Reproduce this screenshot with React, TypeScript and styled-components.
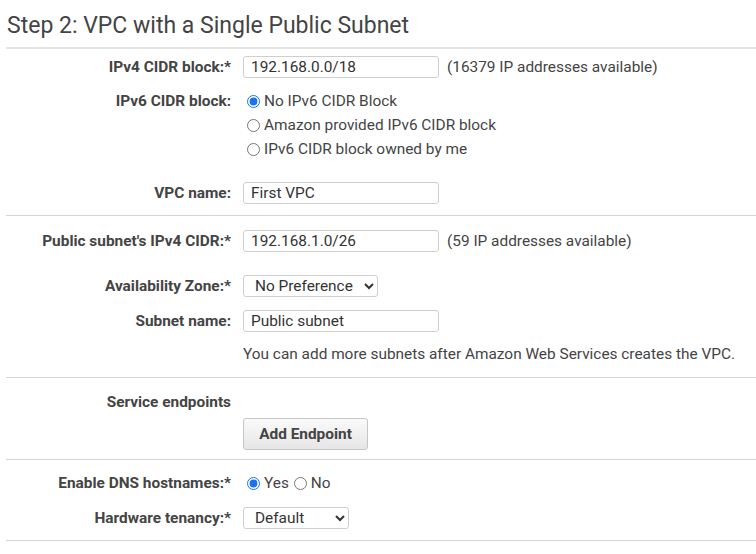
import React from "react";
import styled, { createGlobalStyle } from "styled-components";

const Global = createGlobalStyle`
  html, body { margin: 0; padding: 0; background: #fff; }
  body { font-family: Roboto, "Liberation Sans", Arial, sans-serif; color: #444; }
  * { box-sizing: border-box; }
`;

const FS = 15.4;

const Page = styled.div`
  width: 756px;
  height: 554px;
  padding-left: 6px;
  overflow: hidden;
`;

const Title = styled.h2`
  margin: 0;
  height: 49px;
  padding: 11px 0 0 1px;
  font-size: 23px;
  font-weight: 400;
  line-height: 30px;
  color: #444;
  border-bottom: 2px solid #e4e4e4;
`;

const Section = styled.section<{ $top: number; $bottom: number }>`
  display: flex;
  flex-direction: column;
  padding-top: ${(p) => p.$top}px;
  padding-bottom: ${(p) => p.$bottom}px;
  border-bottom: 1px solid #d5d5d5;
`;

const Row = styled.div<{ $mt?: number; $align?: string }>`
  display: grid;
  grid-template-columns: 225px 1fr;
  column-gap: 12px;
  align-items: ${(p) => p.$align || "center"};
  margin-top: ${(p) => p.$mt || 0}px;
`;

const Label = styled.label<{ $lh?: number }>`
  text-align: right;
  font-size: ${FS}px;
  font-weight: 700;
  color: #444;
  line-height: ${(p) => p.$lh || 18}px;
  white-space: nowrap;
`;

const Control = styled.div`
  display: flex;
  align-items: center;
  font-size: ${FS}px;
  color: #444;
`;

const TextInput = styled.input`
  width: 196px;
  height: 22px;
  border: 1px solid #cfcfcf;
  border-radius: 3px;
  padding: 0 7px;
  font-family: Roboto, "Liberation Sans", Arial, sans-serif;
  font-size: ${FS}px;
  color: #333;
  background: #fff;
  outline: none;
`;

const Hint = styled.span`
  margin-left: 8px;
  font-size: ${FS}px;
  color: #444;
  white-space: nowrap;
`;

const Note = styled.div`
  font-size: ${FS}px;
  line-height: 18px;
  color: #444;
  white-space: nowrap;
`;

const RadioStack = styled.div`
  display: flex;
  flex-direction: column;
`;

const RadioLine = styled.label<{ $inline?: boolean }>`
  display: inline-flex;
  align-items: center;
  height: 24px;
  font-size: ${FS}px;
  color: #444;
  white-space: nowrap;
  margin-right: ${(p) => (p.$inline ? 1 : 0)}px;
`;

const Radio = styled.input.attrs({ type: "radio" })`
  width: 13px;
  height: 13px;
  margin: 0 4px 0 4px;
  accent-color: #1a73e8;
`;

const Select = styled.select<{ $w: number }>`
  width: ${(p) => p.$w}px;
  height: 22px;
  border: 1px solid #cfcfcf;
  border-radius: 3px;
  padding: 0 4px 0 7px;
  font-family: Roboto, "Liberation Sans", Arial, sans-serif;
  font-size: ${FS}px;
  color: #333;
  background: #fff;
  outline: none;
`;

const Button = styled.button`
  width: 125px;
  height: 32px;
  border: 1px solid #c6c6c6;
  border-radius: 3px;
  background: linear-gradient(#fafafa, #e6e6e6);
  font-family: Roboto, "Liberation Sans", Arial, sans-serif;
  font-size: ${FS}px;
  font-weight: 700;
  color: #444;
  cursor: pointer;
`;

export default function App() {
  return (
    <Page>
      <Global />
      <Title>Step 2: VPC with a Single Public Subnet</Title>

      <Section $top={7} $bottom={11}>
        <Row>
          <Label>IPv4 CIDR block:*</Label>
          <Control>
            <TextInput defaultValue="192.168.0.0/18" />
            <Hint>(16379 IP addresses available)</Hint>
          </Control>
        </Row>
        <Row $mt={11} $align="start">
          <Label $lh={24}>IPv6 CIDR block:</Label>
          <RadioStack>
            <RadioLine>
              <Radio name="ipv6" defaultChecked />
              No IPv6 CIDR Block
            </RadioLine>
            <RadioLine>
              <Radio name="ipv6" />
              Amazon provided IPv6 CIDR block
            </RadioLine>
            <RadioLine>
              <Radio name="ipv6" />
              IPv6 CIDR block owned by me
            </RadioLine>
          </RadioStack>
        </Row>
        <Row $mt={21}>
          <Label>VPC name:</Label>
          <Control>
            <TextInput defaultValue="First VPC" />
          </Control>
        </Row>
      </Section>

      <Section $top={14} $bottom={14}>
        <Row>
          <Label>Public subnet's IPv4 CIDR:*</Label>
          <Control>
            <TextInput defaultValue="192.168.1.0/26" />
            <Hint>(59 IP addresses available)</Hint>
          </Control>
        </Row>
        <Row $mt={23}>
          <Label>Availability Zone:*</Label>
          <Control>
            <Select $w={135} defaultValue="none">
              <option value="none">No Preference</option>
            </Select>
          </Control>
        </Row>
        <Row $mt={13}>
          <Label>Subnet name:</Label>
          <Control>
            <TextInput defaultValue="Public subnet" />
          </Control>
        </Row>
        <Row $mt={13}>
          <span />
          <Note>You can add more subnets after Amazon Web Services creates the VPC.</Note>
        </Row>
      </Section>

      <Section $top={15} $bottom={9}>
        <Row>
          <Label>Service endpoints</Label>
          <span />
        </Row>
        <Row $mt={7}>
          <span />
          <Control>
            <Button>Add Endpoint</Button>
          </Control>
        </Row>
      </Section>

      <Section $top={11} $bottom={11}>
        <Row>
          <Label $lh={24}>Enable DNS hostnames:*</Label>
          <Control>
            <RadioLine $inline>
              <Radio name="dns" defaultChecked />
              Yes
            </RadioLine>
            <RadioLine>
              <Radio name="dns" />
              No
            </RadioLine>
          </Control>
        </Row>
        <Row $mt={12}>
          <Label>Hardware tenancy:*</Label>
          <Control>
            <Select $w={106} defaultValue="default">
              <option value="default">Default</option>
            </Select>
          </Control>
        </Row>
      </Section>
    </Page>
  );
}
